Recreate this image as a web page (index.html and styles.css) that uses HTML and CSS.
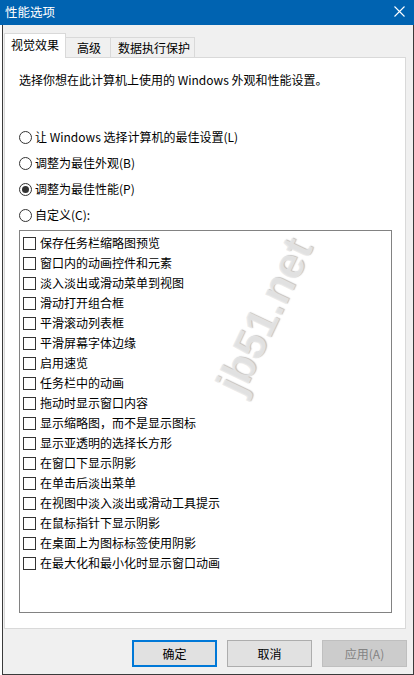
FILE: index.html
```html
<!DOCTYPE html>
<html lang="zh-CN">
<head>
<meta charset="utf-8">
<title>性能选项</title>
<link rel="stylesheet" href="styles.css">
</head>
<body>
<div class="window">
  <div class="titlebar">
    <span class="title">性能选项</span>
    <svg class="close" width="11" height="11" viewBox="0 0 11 11"><path d="M0.5 0.5 L10.5 10.5 M10.5 0.5 L0.5 10.5" stroke="#fff" stroke-width="1.1" fill="none"/></svg>
  </div>
  <div class="frame">
    <div class="tabs">
      <div class="tab tab-active tab-w1">视觉效果</div>
      <div class="tab tab-w2">高级</div>
      <div class="tab tab-w3">数据执行保护</div>
    </div>
    <div class="panel">
      <p class="intro">选择你想在此计算机上使用的 Windows 外观和性能设置。</p>
      <div class="radios">
        <div class="radio-row"><span class="radio"></span><span>让 Windows 选择计算机的最佳设置(L)</span></div>
        <div class="radio-row"><span class="radio"></span><span>调整为最佳外观(B)</span></div>
        <div class="radio-row"><span class="radio radio-on"></span><span>调整为最佳性能(P)</span></div>
        <div class="radio-row"><span class="radio"></span><span>自定义(C):</span></div>
      </div>
      <div class="listbox">
        <div class="check-row"><span class="box"></span><span>保存任务栏缩略图预览</span></div>
        <div class="check-row"><span class="box"></span><span>窗口内的动画控件和元素</span></div>
        <div class="check-row"><span class="box"></span><span>淡入淡出或滑动菜单到视图</span></div>
        <div class="check-row"><span class="box"></span><span>滑动打开组合框</span></div>
        <div class="check-row"><span class="box"></span><span>平滑滚动列表框</span></div>
        <div class="check-row"><span class="box"></span><span>平滑屏幕字体边缘</span></div>
        <div class="check-row"><span class="box"></span><span>启用速览</span></div>
        <div class="check-row"><span class="box"></span><span>任务栏中的动画</span></div>
        <div class="check-row"><span class="box"></span><span>拖动时显示窗口内容</span></div>
        <div class="check-row"><span class="box"></span><span>显示缩略图，而不是显示图标</span></div>
        <div class="check-row"><span class="box"></span><span>显示亚透明的选择长方形</span></div>
        <div class="check-row"><span class="box"></span><span>在窗口下显示阴影</span></div>
        <div class="check-row"><span class="box"></span><span>在单击后淡出菜单</span></div>
        <div class="check-row"><span class="box"></span><span>在视图中淡入淡出或滑动工具提示</span></div>
        <div class="check-row"><span class="box"></span><span>在鼠标指针下显示阴影</span></div>
        <div class="check-row"><span class="box"></span><span>在桌面上为图标标签使用阴影</span></div>
        <div class="check-row"><span class="box"></span><span>在最大化和最小化时显示窗口动画</span></div>
      </div>
    </div>
    <div class="buttons">
      <div class="btn btn-default">确定</div>
      <div class="btn">取消</div>
      <div class="btn btn-disabled">应用(A)</div>
    </div>
  </div>
</div>
<div class="watermark">jb51.net</div>
</body>
</html>
```
FILE: styles.css
```css
* { box-sizing: border-box; }
html, body { margin: 0; padding: 0; }
body {
  width: 414px;
  height: 675px;
  overflow: hidden;
  background: #ffffff;
  font-family: "Noto Sans CJK SC", "Noto Sans", sans-serif;
  font-size: 12px;
  color: #000;
  position: relative;
}
.window {
  display: flex;
  flex-direction: column;
  height: 675px;
}
.titlebar {
  height: 25px;
  flex: none;
  background: #0063b1;
  color: #fff;
  display: flex;
  align-items: center;
  justify-content: space-between;
  padding: 0 9px 2px 5px;
}
.title { font-size: 12.5px; line-height: 16px; }
.close { display: block; }
.frame {
  flex: 1;
  margin-left: 2px;
  background: #f0f0f0;
  border-left: 1px solid #3a3a3a;
  border-right: 1px solid #3a3a3a;
  border-bottom: 1px solid #3a3a3a;
  padding: 8px 7px 0 1px;
  display: flex;
  flex-direction: column;
}
.tabs {
  height: 24px;
  display: flex;
  align-items: flex-end;
}
.tab {
  height: 20px;
  line-height: 19px;
  text-align: center;
  background: #f0f0f0;
  border: 1px solid #d9d9d9;
  border-bottom: none;
  border-left: none;
}
.tab-active {
  height: 25px;
  line-height: 22px;
  margin-bottom: -1px;
  background: #fff;
  border-left: 1px solid #d9d9d9;
  position: relative;
  z-index: 1;
}
.tab-w1 { width: 62px; }
.tab-w2 { width: 45px; padding-left: 2px; }
.tab-w3 { width: 84px; padding-left: 3px; }
.panel {
  height: 572px;
  background: #fff;
  border: 1px solid #d9d9d9;
  padding: 14px 13px 0 14px;
}
.intro {
  margin: 0;
  line-height: 16px;
}
.radios {
  margin-top: 39px;
  display: flex;
  flex-direction: column;
  gap: 6px;
}
.radio-row {
  height: 20px;
  display: flex;
  align-items: center;
  gap: 3px;
  line-height: 16px;
}
.radio {
  width: 13px;
  height: 13px;
  border: 1px solid #333;
  border-radius: 50%;
  background: #fff;
  display: flex;
  align-items: center;
  justify-content: center;
}
.radio-on::after {
  content: "";
  width: 7px;
  height: 7px;
  border-radius: 50%;
  background: #333;
}
.listbox {
  margin-top: 5px;
  height: 383px;
  border: 1px solid #828282;
  padding: 2px 0 0 3px;
}
.check-row {
  height: 20px;
  display: flex;
  align-items: center;
  gap: 4px;
  line-height: 16px;
}
.box {
  width: 13px;
  height: 13px;
  border: 1px solid #333;
  background: #fff;
  flex: none;
}
.buttons {
  margin-top: 11px;
  margin-right: -1px;
  display: flex;
  justify-content: flex-end;
  gap: 10px;
}
.btn {
  width: 85px;
  height: 27px;
  border: 1px solid #adadad;
  background: #e1e1e1;
  display: flex;
  align-items: center;
  justify-content: center;
  line-height: 16px;
}
.btn-default {
  border: 2px solid #0078d7;
}
.btn-disabled {
  background: #cccccc;
  border-color: #bfbfbf;
  color: #838383;
}
.watermark {
  position: absolute;
  left: 264px;
  top: 316px;
  transform: translate(-50%, -50%) rotate(-64.6deg);
  font-family: "Liberation Sans", Arial, sans-serif;
  font-weight: bold;
  font-size: 44px;
  line-height: 1;
  color: rgba(232, 232, 232, 0.85);
  text-shadow: 1px 1px 1px rgba(140, 140, 140, 0.55);
  white-space: nowrap;
  pointer-events: none;
}
```
